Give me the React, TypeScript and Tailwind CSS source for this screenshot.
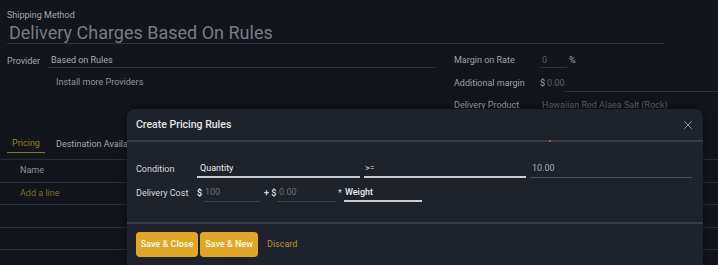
import { X } from 'lucide-react'

function Line({ children }: { children?: React.ReactNode }) {
  return <div className="h-[22.5px] border-b border-[#2a2e35] flex items-center pl-[20px]">{children}</div>
}

function PricingModal() {
  return (
    <div className="absolute left-[127px] top-[109px] w-[576px] h-[175px] rounded-[8px] bg-[#1e222a] shadow-[0_0_12px_rgba(0,0,0,0.5)]">
      <div className="h-[33px] flex items-center justify-between pl-[9px] pr-[8px] border-b-2 border-[#383d45] relative">
        <span className="text-[10.5px] font-medium text-[#e4e6e8]">Create Pricing Rules</span>
        <X size={14} strokeWidth={1.5} className="text-[#9da1a7]" />
        <span className="absolute left-[422px] bottom-[-2px] w-[2px] h-[2px] bg-[#d23a3a]" />
      </div>

      <div className="pl-[9px] pt-[19px] pb-[20px] border-b-2 border-[#383d45] flex flex-col gap-[7px] text-[9px]">
        <div className="flex items-end h-[17px]">
          <span className="w-[61px] self-center text-[#d7d9dc]">Condition</span>
          <div className="w-[163px] h-[17px] flex items-center border-b-2 border-[#c9cbce] pl-[3px] text-[#eceef0]">Quantity</div>
          <div className="w-[162px] ml-[4px] h-[17px] flex items-center border-b-2 border-[#c9cbce] pl-[1px] text-[#d7d9dc]">&gt;=</div>
          <div className="w-[162px] ml-[4px] h-[17px] flex items-center border-b border-[#4a4f57] pl-[2px] text-[#a8acb2]">10.00</div>
        </div>
        <div className="flex items-end h-[17px]">
          <span className="w-[61px] self-center text-[#d7d9dc]">Delivery Cost</span>
          <span className="w-[7px] self-center text-[#eceef0] font-semibold">$</span>
          <div className="w-[56px] h-[17px] flex items-center border-b border-[#3e434b] pl-[1px] text-[#6c7179]">100</div>
          <span className="w-[17px] self-center pl-[4px] text-[#d7d9dc] font-semibold">+ $</span>
          <div className="w-[59px] h-[17px] flex items-center border-b border-[#3e434b] pl-[2px] text-[#6c7179]">0.00</div>
          <span className="w-[8px] self-center pl-[2px] text-[#d7d9dc]">*</span>
          <div className="w-[78px] h-[17px] flex items-center border-b-2 border-[#c9cbce] pl-[1px] text-[#eceef0] font-medium">Weight</div>
        </div>
      </div>

      <div className="pl-[9px] pt-[8px] flex items-center gap-[2px]">
        <button className="w-[62px] h-[25px] rounded-[4px] bg-[#dfa628] text-[9px] font-semibold text-[#fbf3df]">Save &amp; Close</button>
        <button className="w-[58px] h-[25px] rounded-[4px] bg-[#dfa628] text-[9px] font-semibold text-[#fbf3df]">Save &amp; New</button>
        <span className="ml-[7px] text-[9px] text-[#b9952f]">Discard</span>
      </div>
    </div>
  )
}

export default function App() {
  return (
    <div className="relative w-[718px] h-[265px] overflow-hidden bg-[#12151b] font-['Roboto',sans-serif]">
      <div className="pl-[7px] pt-[9px]">
        <p className="text-[9px] leading-[12px] text-[#a3a7ad]">Shipping Method</p>
        <div className="w-[657px] h-[23px] flex items-center border-b border-[#2c3038] pl-[2px]">
          <span className="text-[18px] text-[#777c84]">Delivery Charges Based On Rules</span>
        </div>
      </div>

      <div className="flex pl-[7px] mt-[9px] text-[9px]">
        <div className="w-[428px]">
          <div className="flex items-center h-[15px] pt-[2px]">
            <span className="w-[41px] text-[#a3a7ad]">Provider</span>
            <div className="flex-1 h-[13px] flex items-center border-b border-[#2c3038] pl-[3px] text-[#a9adb3]">Based on Rules</div>
          </div>
          <p className="mt-[8px] pl-[49px] text-[#8f949b]">Install more Providers</p>
        </div>
        <div className="ml-[19px] flex-1">
          <div className="flex items-center h-[15px] pt-[1px]">
            <span className="w-[86px] text-[#9da1a7]">Margin on Rate</span>
            <div className="w-[27px] h-[14px] flex items-center border-b border-[#2c3038] pl-[2px] text-[#5a5f67]">0</div>
            <span className="ml-[2px] text-[#a3a7ad]">%</span>
          </div>
          <div className="flex items-center h-[17px] mt-[7px]">
            <span className="w-[86px] text-[#9da1a7]">Additional margin</span>
            <span className="w-[7px] text-[#a3a7ad]">$</span>
            <span className="text-[#5a5f67]">0.00</span>
            <div className="flex-1 h-[17px] border-b border-[#2c3038]" />
          </div>
          <div className="flex items-center h-[17px] mt-[5px]">
            <span className="w-[88px] text-[#9da1a7]">Delivery Product</span>
            <span className="text-[#5d626a]">Hawaiian Red Alaea Salt (Rock)</span>
          </div>
        </div>
      </div>

      <div className="mt-[21px] border-b border-[#2a2e35] h-[25px] flex items-end pl-[7px] text-[9px]">
        <div className="h-[17px] mb-[6px] w-[38px] flex items-center justify-center border-b border-[#8e7328] text-[#9b7e2e]">Pricing</div>
        <span className="ml-[11px] h-[17px] mb-[6px] flex items-center text-[#a3a7ad]">Destination Availability</span>
      </div>
      <div className="text-[9px]">
        <Line><span className="text-[#8f949b]">Name</span></Line>
        <Line><span className="text-[#7f6a2c]">Add a line</span></Line>
        <Line />
        <Line />
      </div>

      <PricingModal />
    </div>
  )
}
